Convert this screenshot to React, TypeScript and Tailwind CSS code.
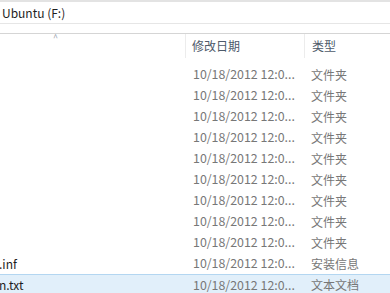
import React from 'react';

const rows = [
  { name: '', type: '文件夹' },
  { name: '', type: '文件夹' },
  { name: '', type: '文件夹' },
  { name: '', type: '文件夹' },
  { name: '', type: '文件夹' },
  { name: '', type: '文件夹' },
  { name: '', type: '文件夹' },
  { name: '', type: '文件夹' },
  { name: '', type: '文件夹' },
  { name: '.inf', type: '安装信息' },
  { name: 'n.txt', type: '文本文档', selected: true },
];

const font = { fontFamily: '"Noto Sans CJK SC", "Noto Sans", sans-serif' };

const App: React.FC = () => {
  return (
    <div className="w-[390px] h-[293px] overflow-hidden bg-white text-[12px]" style={font}>
      <div className="h-[2px] bg-[#e3e3e3]" />
      <div className="h-[22px] flex items-center pl-[2px] pt-[1px] text-[12px] text-[#1e1e1e] border-b border-[#e6e6e6]">
        Ubuntu (F:)
      </div>
      <div className="h-[9px]" />
      <div className="h-[1px] bg-[#d5d5d5]" />
      <div className="h-[24px] flex text-[#4d5a6a]">
        <div className="w-[186px] relative border-r border-[#ececec]">
          <span className="absolute left-[53px] top-[-3px] text-[9px] text-[#9aa3ad]">^</span>
        </div>
        <div className="w-[119px] pl-[6px] flex items-center border-r border-[#ececec]">修改日期</div>
        <div className="flex-1 pl-[7px] flex items-center">类型</div>
      </div>
      <div className="h-[6px]" />
      {rows.map((r, i) => (
        <div
          key={i}
          className={
            'h-[21px] flex items-center text-[#777777] ' +
            (r.selected ? 'bg-[#e1effa] border-t border-[#b3d6f1]' : '')
          }
        >
          <div className="w-[187px] -ml-[1px] text-[#1e1e1e]">{r.name}</div>
          <div className="w-[120px] pl-[7px] text-[12.4px]">10/18/2012 12:0...</div>
          <div className="flex-1 pl-[5px]">{r.type}</div>
        </div>
      ))}
    </div>
  );
};

export default App;
